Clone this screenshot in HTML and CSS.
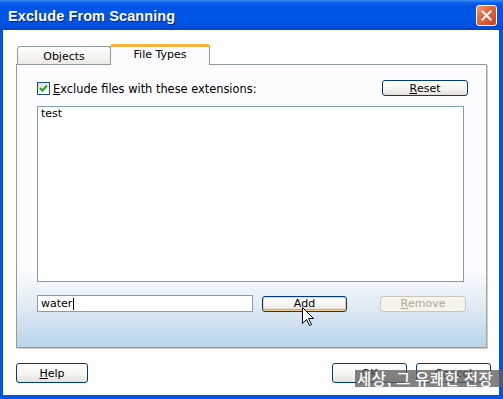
FILE: index.html
```html
<!DOCTYPE html>
<html lang="en">
<head>
  <meta charset="utf-8">
  <title>Exclude From Scanning</title>
  <link rel="stylesheet" href="styles.css">
</head>
<body>
  <div class="window">
    <div class="titlebar">
      <span class="title">Exclude From Scanning</span>
      <span class="close">
        <svg width="11" height="11" viewBox="0 0 11 11"><path d="M1.5 1.5 L9.5 9.5 M9.5 1.5 L1.5 9.5" stroke="#fff" stroke-width="2" stroke-linecap="square"/></svg>
      </span>
    </div>
    <div class="client">
      <div class="tabs">
        <div class="tab">Objects</div>
        <div class="tab active">File Types</div>
      </div>
      <div class="panel">
        <div class="row top-row">
          <label class="check">
            <span class="box">
              <svg width="9" height="9" viewBox="0 0 9 9"><path d="M1 4 L3.5 6.5 L8 1.5" fill="none" stroke="#21a121" stroke-width="2"/></svg>
            </span>
            <span><u>E</u>xclude files with these extensions:</span>
          </label>
          <span class="btn reset"><u>R</u>eset</span>
        </div>
        <div class="list">test</div>
        <div class="row add-row">
          <div class="input">water<span class="caret"></span></div>
          <span class="btn add">Add</span>
          <span class="btn remove disabled"><u>R</u>emove</span>
        </div>
      </div>
      <div class="footer">
        <span class="btn help"><u>H</u>elp</span>
        <span class="spacer"></span>
        <span class="btn ok">OK</span>
        <span class="btn cancel">Cancel</span>
      </div>
    </div>
    <svg class="cursor" width="13" height="20" viewBox="0 0 13 20">
      <path d="M0.5 0.5 L0.5 16.5 L4.5 12.5 L7.5 18.5 L9.5 17.5 L6.5 11.5 L11.5 11.5 Z" fill="#fff" stroke="#000" stroke-width="1"/>
    </svg>
    <div class="watermark">세상, 그 유쾌한 전장</div>
  </div>
</body>
</html>
```

FILE: styles.css
```css
body {
  margin: 0;
  font-family: "DejaVu Sans", sans-serif;
  font-size: 11px;
  color: #000;
}
.window {
  position: relative;
  width: 503px;
  height: 399px;
  background: #0055e5;
  display: flex;
  flex-direction: column;
  overflow: hidden;
}
.titlebar {
  height: 30px;
  display: flex;
  align-items: center;
  padding: 0 6px 0 8px;
  background: linear-gradient(to bottom, #3d8cf6 0, #0a5fe8 3px, #0055e5 6px, #0056e8 20px, #0050dd 26px, #0046c8 30px);
}
.title {
  flex: 1;
  color: #fff;
  font-family: "Liberation Sans", sans-serif;
  font-weight: bold;
  font-size: 14.5px;
  letter-spacing: 0.1px;
  text-shadow: 1px 1px 0 #0a1e72;
  margin-top: 1px;
}
.close {
  width: 19px;
  height: 19px;
  border: 1px solid #fff;
  border-radius: 3px;
  background: linear-gradient(135deg, #f29a74 0, #e5653c 40%, #cc4420 100%);
  display: flex;
  align-items: center;
  justify-content: center;
}
.client {
  flex: 1;
  margin: 0 4px 4px 3px;
  background: #fdfdfb;
  display: flex;
  flex-direction: column;
  padding-top: 14px;
}
.tabs {
  display: flex;
  align-items: flex-end;
  margin-left: 14px;
  height: 20px;
}
.tab {
  width: 94px;
  height: 18px;
  border: 1px solid #919b9c;
  border-bottom: none;
  border-radius: 3px 3px 0 0;
  background: linear-gradient(to bottom, #fff, #eceae3);
  display: flex;
  align-items: center;
  justify-content: center;
  padding-top: 1px;
  box-sizing: border-box;
}
.tab.active {
  width: 100px;
  height: 21px;
  margin-left: -1px;
  background: #fcfcfe;
  border-top: 3px solid #f6b13b;
  padding-top: 0;
  padding-bottom: 3px;
  position: relative;
  top: 1px;
}
.panel {
  margin: 0 12px 0 13px;
  height: 284px;
  box-sizing: border-box;
  border: 1px solid #919b9c;
  border-right-color: #a5a8a0;
  box-shadow: 1px 1px 0 #d0cfc6;
  background: linear-gradient(to bottom, #fcfcfe 0, #fcfcfe 72%, #e4edf5 84%, #b8d4ea 100%);
  padding: 15px 20px 0 20px;
}
.row {
  display: flex;
  align-items: center;
}
.top-row {
  height: 16px;
  justify-content: space-between;
  margin-right: -2px;
}
.check {
  display: flex;
  align-items: center;
  gap: 3px;
  margin-top: 1px;
  font-size: 11.4px;
}
.box {
  width: 11px;
  height: 11px;
  border: 1px solid #1c5180;
  background: linear-gradient(135deg, #dcdcd7, #fff);
  display: flex;
  align-items: center;
  justify-content: center;
}
.btn {
  box-sizing: border-box;
  height: 16px;
  border: 1px solid #003c74;
  border-radius: 3px;
  background: linear-gradient(to bottom, #fff 0, #f4f3ee 60%, #e3e1d8 100%);
  display: flex;
  align-items: center;
  justify-content: center;
  font-size: 11px;
}
.reset {
  width: 86px;
}
.list {
  margin-top: 10px;
  width: 427px;
  height: 176px;
  box-sizing: border-box;
  border: 1px solid #7f9db9;
  background: #fff;
  padding: 0 3px;
  line-height: 14px;
}
.add-row {
  margin-top: 13px;
}
.input {
  width: 216px;
  height: 17px;
  box-sizing: border-box;
  border: 1px solid #7f9db9;
  background: #fff;
  padding: 0 3px;
  display: flex;
  align-items: center;
}
.caret {
  width: 1px;
  height: 12px;
  background: #000;
  margin-left: 1px;
}
.add {
  margin-left: 9px;
  width: 85px;
  box-shadow: inset 0 0 0 1px #fbd38a, inset 0 -1px 0 1px #f0a12c;
}
.remove {
  margin-left: 33px;
  width: 86px;
}
.btn.disabled {
  border-color: #c9c7ba;
  background: #f5f4ea;
  color: #aca899;
}
.footer {
  display: flex;
  align-items: center;
  margin-top: 15px;
  padding: 0 8px 0 13px;
  gap: 9px;
}
.footer .btn {
  height: 20px;
  width: 75px;
}
.footer .help {
  width: 72px;
}
.spacer {
  flex: 1;
}
.cursor {
  position: absolute;
  left: 302px;
  top: 307px;
}
.watermark {
  position: absolute;
  left: 355px;
  top: 370px;
  width: 148px;
  height: 17px;
  background: rgba(95, 95, 95, 0.78);
  color: #fff;
  font-family: "Noto Sans CJK KR", sans-serif;
  font-size: 15.5px;
  font-weight: 500;
  letter-spacing: 0.6px;
  line-height: 17px;
  padding-left: 2px;
  white-space: nowrap;
  box-sizing: border-box;
}
```
